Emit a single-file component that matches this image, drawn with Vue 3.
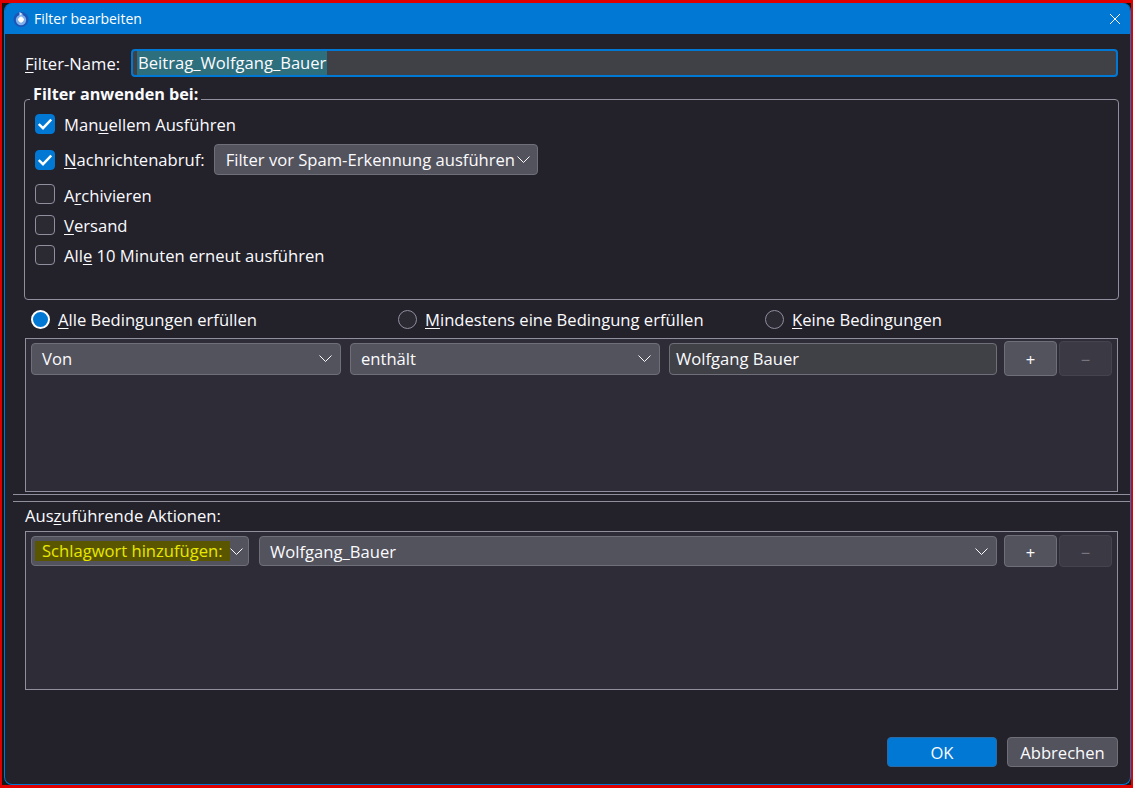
<script setup>
const radios = [
  { key: 'A', after: 'lle Bedingungen erfüllen', checked: true },
  { key: 'M', after: 'indestens eine Bedingung erfüllen', checked: false },
  { key: 'K', after: 'eine Bedingungen', checked: false }
];
</script>

<template>
  <div class="screen">
    <div class="dialog">
      <header class="titlebar">
        <svg class="app-icon" width="16" height="16" viewBox="0 0 16 16">
          <circle cx="8" cy="8.5" r="7.5" fill="#1c55b8" />
          <circle cx="8" cy="9" r="5.2" fill="#7fb0ea" />
          <path d="M8 5.2 L11.2 8.6 L8 12 L4.8 8.6 Z" fill="#fff" />
          <circle cx="8" cy="8.6" r="2.6" fill="#fff" />
          <path d="M6.5 1 L10 3.2 L6.5 4.6 Z" fill="#cfe6fb" />
        </svg>
        <span class="title">Filter bearbeiten</span>
        <svg class="close" width="10" height="10" viewBox="0 0 10 10">
          <path d="M0 0 L10 10 M10 0 L0 10" stroke="#fff" stroke-width="1" fill="none" />
        </svg>
      </header>

      <main class="content">
        <div class="name-row">
          <label class="name-label"><u>F</u>ilter-Name:</label>
          <div class="name-input"><span class="selected">Beitrag_Wolfgang_Bauer</span></div>
        </div>

        <fieldset class="apply-box">
          <legend>Filter anwenden bei:</legend>
          <div class="check-row">
            <span class="check on">
              <svg width="14" height="12" viewBox="0 0 14 12"><path d="M0.8 6 L5 10.2 L13.2 1.6" stroke="#fff" stroke-width="2.4" fill="none" /></svg>
            </span>
            <span class="check-label">Man<u>u</u>ellem Ausführen</span>
          </div>
          <div class="check-row row-fetch">
            <span class="check on">
              <svg width="14" height="12" viewBox="0 0 14 12"><path d="M0.8 6 L5 10.2 L13.2 1.6" stroke="#fff" stroke-width="2.4" fill="none" /></svg>
            </span>
            <span class="check-label"><u>N</u>achrichtenabruf:</span>
            <div class="select spam-select">
              <span>Filter vor Spam-Erkennung ausführen</span>
              <svg class="chevron" width="13" height="7" viewBox="0 0 13 7"><path d="M0.5 0.5 L6.5 6.5 L12.5 0.5" /></svg>
            </div>
          </div>
          <div class="check-row row-archive">
            <span class="check"></span>
            <span class="check-label">A<u>r</u>chivieren</span>
          </div>
          <div class="check-row row-send">
            <span class="check"></span>
            <span class="check-label"><u>V</u>ersand</span>
          </div>
          <div class="check-row row-timer">
            <span class="check"></span>
            <span class="check-label">All<u>e</u> 10 Minuten erneut ausführen</span>
          </div>
        </fieldset>

        <div class="radio-row">
          <div v-for="r in radios" :key="r.key" class="radio-item">
            <span class="radio" :class="{ on: r.checked }"></span>
            <span><u>{{ r.key }}</u>{{ r.after }}</span>
          </div>
        </div>

        <div class="list cond-list">
          <div class="list-row cond-row">
            <div class="select w-310">
              <span>Von</span>
              <svg class="chevron" width="13" height="7" viewBox="0 0 13 7"><path d="M0.5 0.5 L6.5 6.5 L12.5 0.5" /></svg>
            </div>
            <div class="select w-310">
              <span>enthält</span>
              <svg class="chevron" width="13" height="7" viewBox="0 0 13 7"><path d="M0.5 0.5 L6.5 6.5 L12.5 0.5" /></svg>
            </div>
            <div class="text-input">Wolfgang Bauer</div>
            <button class="small-btn plus">+</button>
            <button class="small-btn minus">−</button>
          </div>
        </div>

        <div class="splitter"></div>

        <div class="actions-label">Aus<u>z</u>uführende Aktionen:</div>

        <div class="list action-list">
          <div class="list-row action-row">
            <div class="select action-type">
              <span class="marker">Schlagwort hinzufügen:</span>
              <svg class="chevron" width="13" height="7" viewBox="0 0 13 7"><path d="M0.5 0.5 L6.5 6.5 L12.5 0.5" /></svg>
            </div>
            <div class="select action-value">
              <span>Wolfgang_Bauer</span>
              <svg class="chevron" width="13" height="7" viewBox="0 0 13 7"><path d="M0.5 0.5 L6.5 6.5 L12.5 0.5" /></svg>
            </div>
            <button class="small-btn plus">+</button>
            <button class="small-btn minus">−</button>
          </div>
        </div>

        <footer class="footer">
          <button class="btn primary">OK</button>
          <button class="btn">Abbrechen</button>
        </footer>
      </main>
    </div>
  </div>
</template>

<style>
html,
body {
  margin: 0;
  background: #e00000;
}
</style>

<style scoped>
.screen {
  box-sizing: border-box;
  width: 1133px;
  height: 788px;
  overflow: hidden;
  background: #161616;
  border-style: solid;
  border-color: #e00000;
  border-width: 3px 2px 3px 2px;
  padding-left: 2px;
  font-family: "Open Sans", "Noto Sans", sans-serif;
  font-size: 16.6px;
  color: #fbfbfe;
}

.dialog {
  box-sizing: border-box;
  width: 1127px;
  height: 782px;
  display: flex;
  flex-direction: column;
  background: #23222b;
  border: 1px solid #0078d4;
  border-top: none;
  border-radius: 8px;
  overflow: hidden;
}

.titlebar {
  height: 31px;
  flex: none;
  display: flex;
  align-items: center;
  background: #0078d4;
  color: #fff;
}

.app-icon {
  margin-left: 8px;
}

.title {
  margin-left: 5px;
  font-size: 14px;
}

.close {
  margin-left: auto;
  margin-right: 10px;
}

.content {
  flex: 1;
  display: flex;
  flex-direction: column;
  padding: 15px 12px 17px 20px;
}

u {
  text-underline-offset: 2px;
}

.name-row {
  display: flex;
  align-items: center;
  height: 28px;
}

.name-label {
  width: 106px;
}

.name-input {
  box-sizing: border-box;
  flex: 1;
  height: 28px;
  display: flex;
  align-items: center;
  padding-left: 4px;
  background: #404146;
  border: 2px solid #0078d4;
  border-radius: 4px;
}

.selected {
  background: #2e6f7e;
  padding: 0 1px;
  line-height: 24px;
}

.apply-box {
  box-sizing: border-box;
  height: 216px;
  margin: 7px -1px 0;
  padding: 0 0 0 10px;
  border: 1px solid #8f8f9d;
  border-radius: 4px;
  min-width: 0;
}

legend {
  margin-left: -5px;
  padding: 0 3px 10px;
  line-height: 20px;
  font-size: 16.2px;
  font-weight: 700;
}

.check-row {
  display: flex;
  align-items: center;
  height: 20px;
  line-height: 22px;
}

.check-label {
  padding-top: 2px;
}

.row-fetch {
  height: 31px;
  margin-top: 10px;
}

.row-fetch .check-label {
  padding-top: 0;
}

.row-archive {
  margin-top: 9px;
}

.row-archive .check-label {
  padding-top: 4px;
}

.row-send {
  margin-top: 11px;
}

.row-timer {
  margin-top: 10px;
}

.check {
  box-sizing: border-box;
  flex: none;
  width: 20px;
  height: 20px;
  margin-right: 9px;
  display: flex;
  align-items: center;
  justify-content: center;
  background: #2b2a33;
  border: 1px solid #8f8f9d;
  border-radius: 4px;
}

.check.on {
  background: #0078d4;
  border-color: #0078d4;
}

.select {
  box-sizing: border-box;
  display: flex;
  align-items: center;
  justify-content: space-between;
  height: 32px;
  padding: 0 8px 0 10px;
  background: #53535d;
  border: 1px solid #6f6f79;
  border-radius: 4px;
}

.chevron {
  flex: none;
}

.chevron path {
  fill: none;
  stroke: #fbfbfe;
  stroke-width: 1;
}

.spam-select {
  width: 324px;
  height: 31px;
  margin-left: 9px;
  padding-left: 11px;
  padding-right: 7px;
}

.radio-row {
  display: grid;
  grid-template-columns: repeat(3, 367px);
  align-items: center;
  height: 38px;
  padding: 1px 0 0 6px;
  box-sizing: border-box;
}

.radio-item {
  display: flex;
  align-items: center;
}

.radio {
  box-sizing: border-box;
  flex: none;
  width: 19px;
  height: 19px;
  margin-right: 8px;
  border: 1px solid #8f8f9d;
  border-radius: 50%;
  background: #2b2a33;
}

.radio.on {
  background: #0078d4;
  border: 2px solid #fff;
}

.list {
  box-sizing: border-box;
  background: #2e2d37;
  border: 1px solid #8f8f9d;
}

.cond-list {
  height: 154px;
}

.action-list {
  height: 159px;
}

.list-row {
  display: flex;
  align-items: center;
  padding: 0 5px;
}

.cond-row {
  height: 35px;
  margin-top: 2px;
}

.action-row {
  height: 32px;
  margin-top: 3px;
}

.w-310 {
  width: 310px;
  margin-right: 9px;
}

.text-input {
  box-sizing: border-box;
  width: 328px;
  height: 32px;
  line-height: 30px;
  padding-left: 6px;
  background: #404146;
  border: 1px solid #6f6f79;
  border-radius: 4px;
}

.action-type {
  width: 218px;
  height: 30px;
  margin-right: 10px;
  padding-left: 3px;
  padding-right: 7px;
}

.action-value {
  width: 738px;
  height: 30px;
}

.marker {
  background: #5a5600;
  color: #e8e800;
  padding: 0 7px;
  line-height: 20px;
  white-space: nowrap;
}

.small-btn {
  box-sizing: border-box;
  width: 53px;
  height: 100%;
  padding: 2px 0 0;
  font-family: inherit;
  font-size: 16.6px;
  border-radius: 4px;
  border: 1px solid #6f6f79;
  background: #53535d;
  color: #fbfbfe;
}

.plus {
  margin-left: 7px;
}

.minus {
  margin-left: 2px;
  background: #3b3a44;
  border-color: #45444e;
  color: #77767f;
}

.splitter {
  box-sizing: border-box;
  height: 8px;
  margin: 2px -12px 0 -12px;
  border-top: 1px solid #8f8f9d;
  border-bottom: 1px solid #8f8f9d;
}

.actions-label {
  height: 29px;
  line-height: 27px;
}

.footer {
  margin-top: auto;
  display: flex;
  justify-content: flex-end;
  gap: 10px;
}

.btn {
  box-sizing: border-box;
  width: 111px;
  height: 30px;
  padding: 0;
  font-family: inherit;
  font-size: 16.6px;
  color: #fbfbfe;
  background: #53535d;
  border: 1px solid #6f6f79;
  border-radius: 4px;
}

.btn.primary {
  width: 110px;
  background: #0078d4;
  border-color: #2a6aa5;
}
</style>
